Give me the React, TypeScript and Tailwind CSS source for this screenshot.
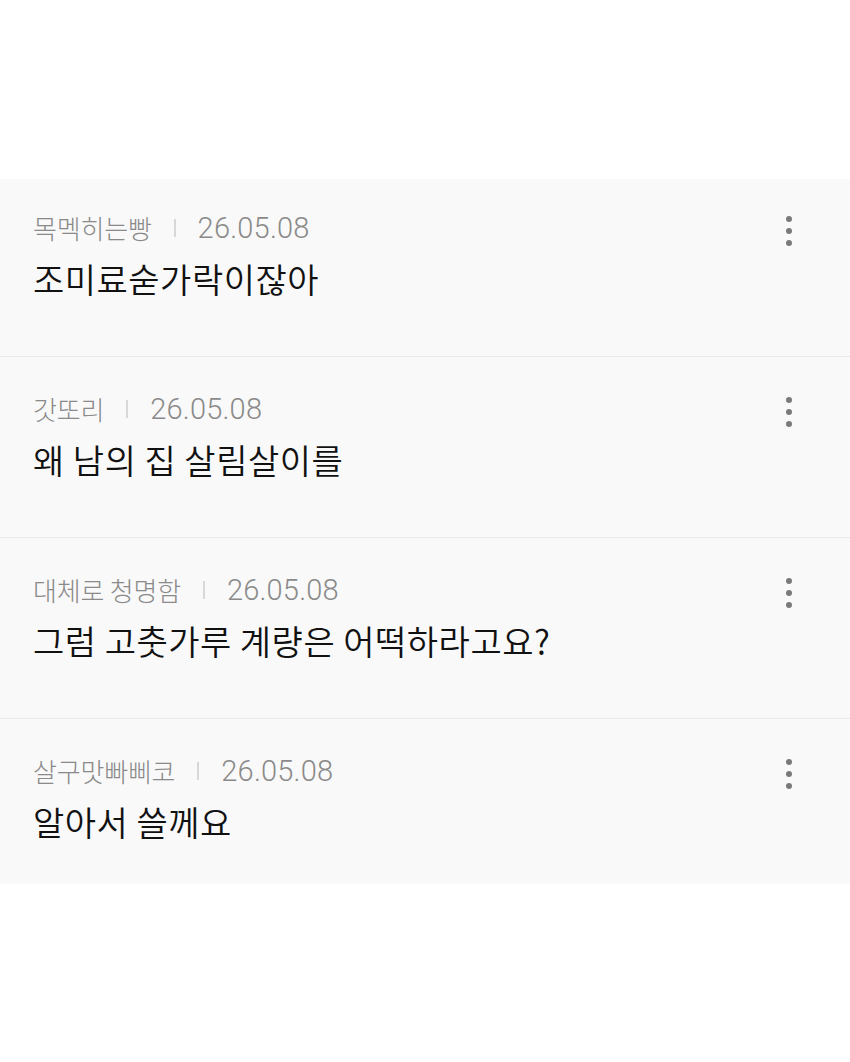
import React from "react";

type Item = { name: string; date: string; text: string };

const items: Item[] = [
  { name: "목멕히는빵", date: "26.05.08", text: "조미료숟가락이잖아" },
  { name: "갓또리", date: "26.05.08", text: "왜 남의 집 살림살이를" },
  { name: "대체로 청명함", date: "26.05.08", text: "그럼 고춧가루 계량은 어떡하라고요?" },
  { name: "살구맛빠삐코", date: "26.05.08", text: "알아서 쓸께요" },
];

function Dots() {
  return (
    <div className="flex flex-col items-center gap-[6px] pt-[3px]">
      <span className="block w-[6px] h-[6px] rounded-full bg-[#7a7a7a]" />
      <span className="block w-[6px] h-[6px] rounded-full bg-[#7a7a7a]" />
      <span className="block w-[6px] h-[6px] rounded-full bg-[#7a7a7a]" />
    </div>
  );
}

export default function App() {
  return (
    <div
      className="w-[850px] h-[1062px] bg-white"
      style={{ fontFamily: '"Noto Sans CJK KR", "Noto Sans", sans-serif' }}
    >
      <div className="h-[179px]" />
      <div className="bg-[#f9f9f9]">
        {items.map((it, i) => {
          const first = i === 0;
          const last = i === items.length - 1;
          return (
            <div
              key={i}
              className={
                "flex items-start pl-[33px] pr-[58px] " +
                (first ? "pt-[34px] " : "pt-[37px] ") +
                (last ? "pb-[42px]" : "pb-[57px] border-b border-[#e9e9e9]")
              }
            >
              <div className="flex-1 flex flex-col gap-[16px]">
                <div className="flex items-center h-[30px] text-[#8a8a8a]">
                  <span className="text-[26px] font-light tracking-[-0.2px] leading-[30px]">{it.name}</span>
                  <span className="mx-[22px] w-[2px] h-[18px] bg-[#d8d8d8]" />
                  <span
                    className="text-[29px] font-light leading-[30px] tracking-[0.2px]"
                    style={{ fontFamily: 'Roboto, "Noto Sans CJK KR", sans-serif' }}
                  >
                    {it.date}
                  </span>
                </div>
                <div className="h-[40px] flex items-center text-[#111111] text-[34px] font-[350] leading-[40px] tracking-[0.5px]">
                  {it.text}
                </div>
              </div>
              <Dots />
            </div>
          );
        })}
      </div>
    </div>
  );
}
